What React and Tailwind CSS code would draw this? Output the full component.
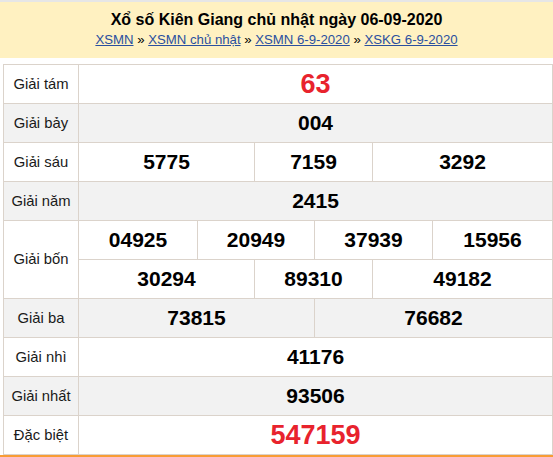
const rows = [
  { label: 'Giải tám', lines: [[{ v: '63', w: 474 }]], red: true, gray: false },
  { label: 'Giải bảy', lines: [[{ v: '004', w: 474 }]], gray: true },
  {
    label: 'Giải sáu',
    lines: [[{ v: '5775', w: 176 }, { v: '7159', w: 118 }, { v: '3292', w: 180 }]],
    gray: false,
  },
  { label: 'Giải năm', lines: [[{ v: '2415', w: 474 }]], gray: true },
  {
    label: 'Giải bốn',
    lines: [
      [{ v: '04925', w: 119 }, { v: '20949', w: 117 }, { v: '37939', w: 118 }, { v: '15956', w: 120 }],
      [{ v: '30294', w: 176 }, { v: '89310', w: 118 }, { v: '49182', w: 180 }],
    ],
    gray: false,
  },
  { label: 'Giải ba', lines: [[{ v: '73815', w: 236 }, { v: '76682', w: 238 }]], gray: true },
  { label: 'Giải nhì', lines: [[{ v: '41176', w: 474 }]], gray: false },
  { label: 'Giải nhất', lines: [[{ v: '93506', w: 474 }]], gray: true },
  { label: 'Đặc biệt', lines: [[{ v: '547159', w: 474 }]], red: true, gray: false },
];

const widthClass = {
  474: 'w-[474px]',
  176: 'w-[176px]',
  118: 'w-[118px]',
  180: 'w-[180px]',
  119: 'w-[119px]',
  117: 'w-[117px]',
  120: 'w-[120px]',
  236: 'w-[236px]',
  238: 'w-[238px]',
};

export default function App() {
  return (
    <div className="w-[553px] h-[457px] bg-white overflow-hidden font-['Liberation_Sans',Arial,sans-serif]">
      <div className="h-[2px] bg-[#e6e6e6]" />
      <div className="h-[56px] bg-[#fff1c1] flex flex-col items-center pt-[8px]">
        <h1 className="text-[16px] leading-[20px] font-bold text-black">Xổ số Kiên Giang chủ nhật ngày 06-09-2020</h1>
        <div className="text-[13.2px] leading-[17px] text-[#2a4f9f] mt-[1px]">
          <a className="underline">XSMN</a> <span className="text-black">»</span>{' '}
          <a className="underline">XSMN chủ nhật</a> <span className="text-black">»</span>{' '}
          <a className="underline">XSMN 6-9-2020</a> <span className="text-black">»</span>{' '}
          <a className="underline">XSKG 6-9-2020</a>
        </div>
      </div>

      <div className="ml-[3px] mt-[6px] w-[550px] border-l border-t border-[#dbd3cb]">
        {rows.map((row) => (
          <div key={row.label} className={`flex ${row.gray ? 'bg-[#f2f2f2]' : 'bg-white'}`}>
            <div className="w-[75px] shrink-0 flex items-center justify-center border-r border-b border-[#dbd3cb] text-[14.8px] text-[#1a1a1a]">
              {row.label}
            </div>
            <div className="flex flex-col">
              {row.lines.map((line, i) => (
                <div key={i} className="flex h-[39px]">
                  {line.map((c) => (
                    <div
                      key={c.v}
                      className={`${widthClass[c.w]} shrink-0 flex items-center justify-center border-r border-b border-[#dbd3cb] font-bold ${
                        row.red ? 'text-[27px] text-[#e8232d]' : 'text-[21px] text-black'
                      }`}
                    >
                      {c.v}
                    </div>
                  ))}
                </div>
              ))}
            </div>
          </div>
        ))}
      </div>
      <div className="h-[3px] bg-[#f89c35]" />
    </div>
  );
}
